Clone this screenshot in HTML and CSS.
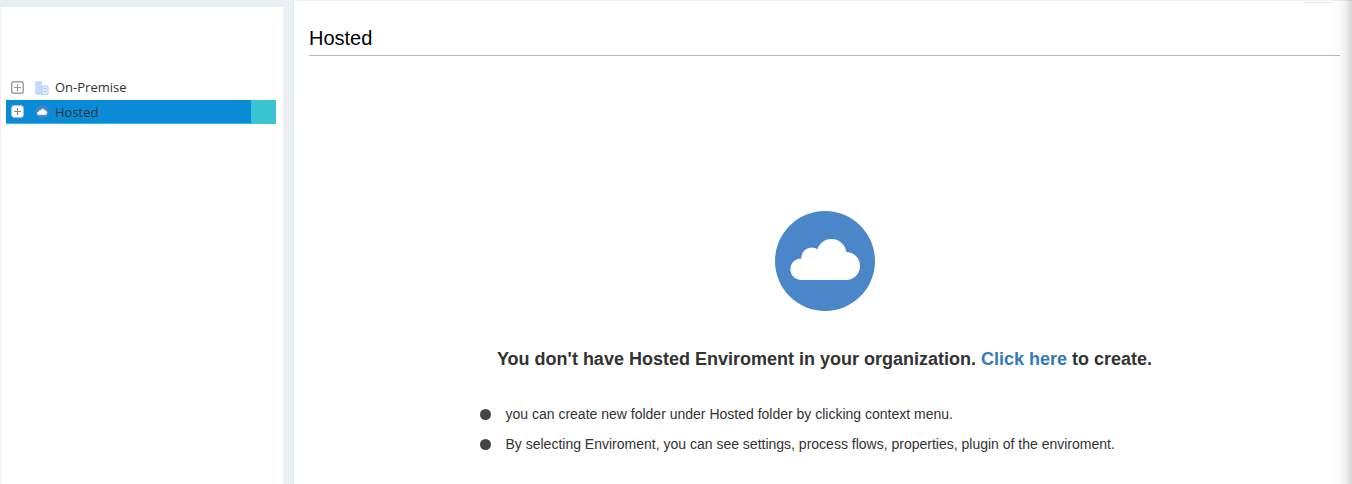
FILE: index.html
```html
<!DOCTYPE html>
<html lang="en">
<head>
<meta charset="utf-8">
<title>Hosted</title>
<link rel="stylesheet" href="styles.css">
</head>
<body>
<div class="app">
  <aside class="sidebar">
    <ul class="tree">
      <li class="node">
        <svg class="expander" viewBox="0 0 13 13"><rect x=".75" y=".75" width="11.5" height="11.5" rx="2" fill="#fff" stroke="#a0a0a0" stroke-width="1.5"/><path d="M3 6.500h7M6.500 3v7" stroke="#999" stroke-width="1.2"/></svg>
        <svg class="node-icon" viewBox="0 0 14 14"><path d="M.5 .5h6.500v13H.5z" fill="#b7d3ff"/><path d="M7 5h6v8.500H7z" fill="#dfebff" stroke="#b4d0fb"/><path d="M2 3h1.200M4.500 3h1.200M2 5.500h1.200M4.500 5.500h1.200M2 8h1.200M4.500 8h1.200M2 10.500h1.200M4.500 10.500h1.200" stroke="#f4f8ff" stroke-width="1.200"/><path d="M8.500 7.500h3M8.500 10.500h3" stroke="#9fc3f8"/></svg>
        <span class="label">On-Premise</span>
      </li>
      <li class="node selected">
        <svg class="expander" viewBox="0 0 13 13"><rect x=".75" y=".75" width="11.5" height="11.5" rx="2" fill="#fff" stroke="#c8ccd0" stroke-width="1"/><path d="M3 6.500h7M6.500 3v7" stroke="#8a8a8a" stroke-width="1.2"/></svg>
        <svg class="node-icon" viewBox="0 0 100 100"><circle cx="50" cy="50" r="48" fill="#4582ca"/><path d="M27 70a11 11 0 0 1 0-22A13 13 0 0 1 42 38 15 15 0 0 1 71 41 14 14 0 0 1 71 70z" fill="#fff" stroke="#fff" stroke-width="3"/></svg>
        <span class="label">Hosted</span>
        <span class="node-menu"></span>
      </li>
    </ul>
  </aside>
  <main class="content">
    <span class="top-mark"></span>
    <h1 class="title">Hosted</h1>
    <section class="empty">
      <svg class="cloud" viewBox="0 0 100 100"><circle cx="50" cy="50" r="50" fill="#4b87c8"/><g fill="#fff"><circle cx="26.200" cy="58.200" r="10.800"/><circle cx="36.700" cy="46.800" r="10.300"/><circle cx="56.500" cy="43" r="15"/><circle cx="71" cy="55" r="14"/><path d="M26.200 50L36 44H62L71 55V69H26.200z"/></g></svg>
      <h2 class="message">You don't have Hosted Enviroment in your organization. <a class="link">Click here</a> to create.</h2>
      <ul class="hints">
        <li class="hint"><span class="dot"></span>you can create new folder under Hosted folder by clicking context menu.</li>
        <li class="hint"><span class="dot"></span>By selecting Enviroment, you can see settings, process flows, properties, plugin of the enviroment.</li>
      </ul>
    </section>
  </main>
  <div class="edge-shadow"></div>
</div>
</body>
</html>
```
FILE: styles.css
```css
* { box-sizing: border-box; }
body { margin: 0; font-family: "Liberation Sans", Arial, sans-serif; color: #333; }
ul { margin: 0; padding: 0; list-style: none; }
.app { position: relative; display: flex; width: 1352px; height: 484px; overflow: hidden; background: #ebeff2; }
.sidebar { width: 282px; margin: 7px 0 0 1px; padding: 68px 0 0 5px; background: #fff; }
.tree { width: 270px; }
.node { display: flex; align-items: center; height: 24px; margin-bottom: 1px; padding-left: 5px; }
.selected { background: #098bd8; border-bottom: 1px solid #35b5ec; }
.expander { width: 13px; height: 13px; flex: none; }
.node-icon { width: 14px; height: 14px; margin: 1px 0 0 11px; flex: none; }
.label { margin-left: 6px; font: 13px/24px "Open Sans", "Noto Sans", sans-serif; color: #333; }
.node-menu { width: 25px; height: 24px; margin: 0 0 -1px auto; background: #37c5d4; }
.content { flex: 1; margin-left: 10px; padding: 26px 12px 0 15px; background: #fff; border-top: 1px solid #f1f1f1; border-left: 1px solid #e5e8ea; }
.top-mark { position: absolute; left: 1304px; top: 2px; width: 27px; height: 1px; background: #e9e9e9; }
.title { margin: 0; height: 29px; border-bottom: 1px solid #b9b9b9; font-size: 20px; line-height: 22px; font-weight: 400; color: #000; }
.empty { display: flex; flex-direction: column; align-items: center; padding-top: 155px; }
.cloud { width: 100px; height: 100px; }
.message { margin: 37px 0 0; font-size: 18px; line-height: 22px; font-weight: 700; white-space: nowrap; }
.link { color: #337ab7; }
.hints { width: 690px; margin-top: 29px; padding-left: 0; }
.hint { display: flex; align-items: center; height: 30px; font-size: 14px; white-space: nowrap; }
.dot { width: 11px; height: 11px; margin-right: 15px; border-radius: 50%; background: #444; }
.edge-shadow { position: absolute; top: 0; right: 0; width: 22px; height: 484px; background: linear-gradient(to right, rgba(0,0,0,0), rgba(0,0,0,.015) 40%, rgba(0,0,0,.06) 70%, rgba(0,0,0,.16)); }
```
